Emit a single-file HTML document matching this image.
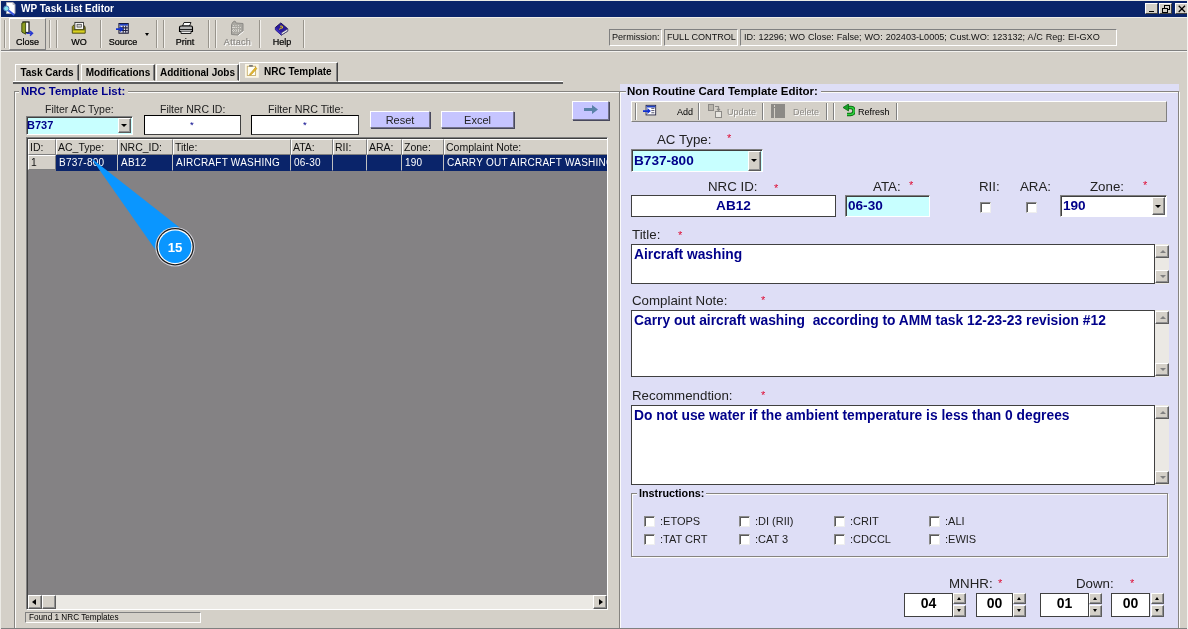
<!DOCTYPE html>
<html>
<head>
<meta charset="utf-8">
<title>WP Task List Editor</title>
<style>
*{box-sizing:border-box;margin:0;padding:0}
html{background:#d4d0c8}
html,body{width:1188px;height:629px;overflow:hidden;font-family:"Liberation Sans",sans-serif;font-size:11px;color:#000}
.a{position:absolute}
.t{position:absolute;white-space:nowrap;line-height:1}
/* title bar */
#tb{left:1px;top:1px;width:1186px;height:16px;background:#0a246a}
#tb .t{color:#fff;font-weight:bold;font-size:10px;left:20px;top:3px}
.wb{position:absolute;top:2px;width:13px;height:11px;background:#d4d0c8;border:1px solid;border-color:#fff #404040 #404040 #fff}
/* sunken/raised */
.sunk{border:1px solid;border-color:#808080 #fff #fff #808080}
.sunk2{border:2px solid;border-color:#808080 #d4d0c8 #d4d0c8 #404040;box-shadow:0 0 0 0 #000}
.raise{border:1px solid;border-color:#fff #808080 #808080 #fff}
.inp{position:absolute;background:#fff;border:1px solid #000;border-right-color:#404040;border-bottom-color:#404040}
.grp{position:absolute;border:1px solid #868480;box-shadow:1px 1px 0 #fbfbfa, inset 1px 1px 0 #fbfbfa}
.sep{position:absolute;width:2px;border-left:1px solid #808080;border-right:1px solid #fff}
.lbl{position:absolute;white-space:nowrap;line-height:1;color:#222}
.star{position:absolute;color:#de0a32;font-size:11px;line-height:1}
.btnl{position:absolute;background:#c6c5ff;border:1px solid;border-color:#fff #74748c #74748c #fff;box-shadow:1px 1px 0 #48485c;text-align:center;color:#222}
.cb{position:absolute;width:11px;height:11px;background:#fff;border:1px solid;border-color:#8a8a8a #eeeeee #eeeeee #8a8a8a;box-shadow:inset 1px 1px 0 #585858}
.sb{position:absolute;background:#d4d0c8;border:1px solid;border-color:#fff #5c5c5c #5c5c5c #fff;box-shadow:inset -1px -1px 0 #909090}
.hd{position:absolute;top:0;height:16px;background:#d4d0c8;border:1px solid;border-color:#fff #808080 #808080 #fff;font-size:10.5px;line-height:14px;padding-left:1px;white-space:nowrap;overflow:hidden;color:#111}
.cell{position:absolute;top:16px;height:16px;background:#0a246a;color:#fff;border-right:1px solid #c0c0c0;border-bottom:1px solid #0a246a;font-size:10px;line-height:16px;padding-left:3px;letter-spacing:.25px;white-space:nowrap;overflow:hidden}
.ta{position:absolute;background:#fff;border:1px solid #404040;color:#00008a;font-weight:bold;font-size:13.8px;line-height:1}
</style>
</head>
<body>
<div id="root" style="position:absolute;left:0;top:0;width:1188px;height:629px;will-change:transform;transform:translateZ(0)">
<!-- TITLE BAR -->
<div id="tb" class="a">
  <svg class="a" style="left:0.500px;top:0px" width="16" height="16" viewBox="0 0 16 16">
    <path d="M4.500 1.500 H11 L13 3.500 V12.500 H4.500 Z" fill="#fff" stroke="#b0b0b8" stroke-width="1"/>
    <path d="M11 1.500 V3.500 H13" fill="none" stroke="#b0b0b8" stroke-width=".8"/>
    <path d="M6.500 9.500 L11.500 13.500" stroke="#3a58e0" stroke-width="2.200" stroke-linecap="round"/>
    <circle cx="4.300" cy="7.500" r="2.600" fill="#86e4f0" stroke="#4a78b8" stroke-width="1"/>
  </svg>
  <div class="t">WP Task List Editor</div>
  <div class="wb" style="left:1144px"><div class="a" style="left:3px;top:6.500px;width:5px;height:1.500px;background:#000"></div></div>
  <div class="wb" style="left:1158px">
    <div class="a" style="left:4px;top:1px;width:6px;height:5px;border:1px solid #000;border-top-width:1.500px"></div>
    <div class="a" style="left:2px;top:3.500px;width:6px;height:5px;border:1px solid #000;border-top-width:1.500px;background:#d4d0c8"></div>
  </div>
  <div class="wb" style="left:1174px">
    <svg class="a" style="left:2px;top:1px" width="8" height="8" viewBox="0 0 8 8"><path d="M0.700 0.700 L7 7 M7 0.700 L0.700 7" stroke="#000" stroke-width="1.250"/></svg>
  </div>
</div>

<!-- MAIN TOOLBAR -->
<div id="toolbar" class="a" style="left:0;top:17px;width:1188px;height:34px;border-bottom:1px solid #808080;box-shadow:0 1px 0 #f4f3f0, inset 0 1px 0 #eeece8">
  <style>
   .tsep{position:absolute;top:3px;height:28px;width:2px;border-left:1px solid #98948c;border-right:1px solid #f2f0ec}
   .tl{position:absolute;top:21px;-webkit-text-stroke-width:.22px;font-size:9px;line-height:1;white-space:nowrap;text-align:center;color:#000}
  </style>
  <div class="tsep" style="left:4px"></div>
  <div class="a raise" style="left:9px;top:1px;width:37px;height:32px"></div>
  <div class="tsep" style="left:49px"></div>
  <div class="tsep" style="left:56px"></div>
  <div class="tsep" style="left:100px"></div>
  <div class="tsep" style="left:156px"></div>
  <div class="tsep" style="left:163px"></div>
  <div class="tsep" style="left:208px"></div>
  <div class="tsep" style="left:215px"></div>
  <div class="tsep" style="left:259px"></div>
  <div class="tsep" style="left:303px"></div>
  <!-- Close icon -->
  <svg class="a" style="left:20px;top:4px" width="16" height="16" viewBox="0 0 16 16">
    <rect x="3" y="1" width="6" height="10.500" fill="#fff" stroke="#101010" stroke-width="1.200"/>
    <path d="M1.800 2.200 L5.600 1 L5.600 13.200 L1.800 11 Z" fill="#8c9c20" stroke="#3c4810" stroke-width=".9"/>
    <path d="M6.500 12.300 H12 M10 10 L12.500 12.300 L10 14.600" fill="none" stroke="#2838d0" stroke-width="1.500"/>
  </svg>
  <div class="tl" style="left:10px;width:35px">Close</div>
  <!-- WO icon -->
  <svg class="a" style="left:71px;top:4px" width="15.500" height="15" viewBox="0 0 18 16" preserveAspectRatio="none">
    <rect x="4.5" y="1.500" width="10" height="8" fill="#fff" stroke="#303030" stroke-width="1"/>
    <rect x="7" y="3.5" width="5" height="3" fill="#d0d0d0" stroke="#404040" stroke-width=".8"/>
    <path d="M1.500 6 L3.5 4 L3.5 9 L15.500 9 L15.500 5 L16.500 7 L16.500 13 L1.500 13 Z" fill="#d8d020" stroke="#404010" stroke-width="1"/>
    <path d="M2 9.500 L16 9.500" stroke="#606010" stroke-width="1"/>
  </svg>
  <div class="tl" style="left:62px;width:34px">WO</div>
  <!-- Source icon -->
  <svg class="a" style="left:116px;top:5.500px" width="13.500" height="11.500" viewBox="0 0 16 13" preserveAspectRatio="none">
    <rect x="3.500" y="0.500" width="11" height="11" fill="#e8e8f0" stroke="#101030" stroke-width="1.200"/>
    <rect x="4" y="1" width="10" height="2" fill="#2040c0"/>
    <path d="M8.500 3 V11 M11.500 3 V11 M4 5.500 H14 M4 8.500 H14" stroke="#202040" stroke-width="1.300"/>
    <path d="M0 6 H5 V3.500 L9 7 L5 10.500 V8 H0 Z" fill="#1030d0"/>
  </svg>
  <div class="tl" style="left:104px;width:38px">Source</div>
  <div class="a" style="left:145px;top:16px;width:0;height:0;border-left:2.500px solid transparent;border-right:2.500px solid transparent;border-top:3px solid #000"></div>
  <!-- Print icon -->
  <svg class="a" style="left:178px;top:4px" width="16" height="16" viewBox="0 0 16 16">
    <path d="M4.500 5 L6 1.500 L13 1.500 L11.500 5 Z" fill="#fff" stroke="#202020" stroke-width="1"/>
    <path d="M1.500 6.500 Q1.500 5 3 5 L13 5 Q14.500 5 14.500 6.500 L14.500 10.500 L1.500 10.500 Z" fill="#b4b4b4" stroke="#000" stroke-width="1.100"/>
    <path d="M2 8.500 H14" stroke="#202020" stroke-width="1"/>
    <path d="M3 10.500 L3 12.500 L13 12.500 L13 10.500" fill="#f0f0f0" stroke="#202020" stroke-width="1"/>
  </svg>
  <div class="tl" style="left:168px;width:34px">Print</div>
  <!-- Attach icon (disabled) -->
  <svg class="a" style="left:229px;top:3px" width="16" height="17" viewBox="0 0 16 17">
    <path d="M2.500 4.500 L4 2 L6 1 L7 3 L14 3.500 L14 11 L9 15 L2.500 14.500 Z" fill="#aaa8a2" stroke="#8c8a86" stroke-width="1"/>
    <path d="M4.500 5 V13 M7 5 V13.500 M9.500 5 V13 M3 7.500 H13 M3 10.500 H12" stroke="#d8d6d0" stroke-width="1" stroke-dasharray="1 1"/>
    <path d="M9.500 15.500 L14.500 11.500" stroke="#fff" stroke-width="1"/>
  </svg>
  <div class="tl" style="left:220px;width:35px;color:#fff;margin:1px 0 0 1px;letter-spacing:.3px">Attach</div>
  <div class="tl" style="left:220px;width:35px;color:#8c8a86;letter-spacing:.3px">Attach</div>
  <!-- Help icon -->
  <svg class="a" style="left:274px;top:4.500px" width="15.500" height="14.500" viewBox="0 0 17 16" preserveAspectRatio="none">
    <path d="M1.500 6 L7.500 1 L15 7.500 L15 10 L8 14.500 L1.500 8.500 Z" fill="#2a1a9c" stroke="#140a50" stroke-width="1"/>
    <path d="M8 12 L15 7.800 L15 10 L8 14.300 Z" fill="#f4f4f4" stroke="#404060" stroke-width=".6"/>
    <path d="M1.500 6 L8 12 L8 14.500 L1.500 8.500 Z" fill="#4030c0"/>
    <text x="5.500" y="8.500" font-family="Liberation Sans" font-size="7" font-weight="bold" fill="#ffe000" transform="rotate(35 7 6)">?</text>
  </svg>
  <div class="tl" style="left:265px;width:34px">Help</div>
  <!-- Permission status -->
  <div class="a sunk" style="left:609px;top:12px;width:53px;height:17px"></div>
  <div class="a sunk" style="left:664px;top:12px;width:74px;height:17px"></div>
  <div class="a sunk" style="left:740px;top:12px;width:377px;height:17px"></div>
  <div class="t" style="left:612px;top:16px;font-size:9.1px;color:#111">Permission:</div>
  <div class="t" style="left:667px;top:16px;font-size:9.1px;color:#111">FULL CONTROL</div>
  <div class="t" style="left:744px;top:16px;font-size:9.1px;color:#111;word-spacing:.45px">ID: 12296; WO Close: False; WO: 202403-L0005; Cust.WO: 123132; A/C Reg: EI-GXO</div>
</div>

<!-- TABS -->
<div id="tabs">
  <style>
   .tab{position:absolute;top:64px;height:17px;border:1px solid;border-color:#fff #404040 transparent #fff;box-shadow:inset -1px 0 0 #808080;font-weight:bold;font-size:10px;line-height:15px;text-align:center;white-space:nowrap;color:#000}
  </style>
  <div class="tab" style="left:15px;width:64px">Task Cards</div>
  <div class="tab" style="left:81px;width:74px">Modifications</div>
  <div class="tab" style="left:156px;width:83px">Additional Jobs</div>
  <div class="tab" style="left:239px;top:62px;width:99px;height:20px;line-height:17px;text-align:left;padding-left:24px;z-index:2;background:#d4d0c8">NRC Template</div>
  <!-- line under tabs -->
  <div class="a" style="left:13px;top:81px;width:550px;height:3px;border-top:1px solid #fff;background:#5c5c5c"></div>
  <div class="a" style="left:240px;top:80px;width:96px;height:2px;background:#d4d0c8;z-index:3"></div>
  <!-- tab icon -->
  <svg class="a" style="left:245px;top:64px;z-index:4" width="13.800" height="13.800" viewBox="0 0 15 15">
    <rect x="0" y="0" width="15" height="15" fill="#fbf6e6"/>
    <rect x="2.500" y="2.500" width="9" height="10" fill="#fffef4" stroke="#c8b070" stroke-width="1"/>
    <rect x="4.500" y="1" width="4" height="2" fill="#7a7a7a"/>
    <path d="M5.500 10.500 L11.500 3.500 L13 5 L7 11.500 L5 12 Z" fill="#e8b828" stroke="#b08818" stroke-width=".6"/>
  </svg>
</div>

<!-- LEFT GROUP -->
<div id="left">
  <div class="grp" style="left:14px;top:91px;width:606px;height:538px"></div>
  <div class="t" style="left:19px;top:86px;padding:0 3px 0 2px;background:#d4d0c8;font-weight:bold;font-size:11.4px;color:#00008a">NRC Template List:</div>
  <div class="lbl" style="left:45px;top:104px;font-size:10.5px">Filter AC Type:</div>
  <div class="lbl" style="left:160px;top:104px;font-size:10.5px">Filter NRC ID:</div>
  <div class="lbl" style="left:268px;top:104px;font-size:10.7px">Filter NRC Title:</div>
  <!-- combo B737 -->
  <div class="a" style="left:26px;top:116px;width:107px;height:19px;background:#c8ffff;border:1px solid;border-color:#808080 #fff #fff #808080;box-shadow:inset 1px 1px 0 #404040"></div>
  <div class="t" style="left:27px;top:120px;font-weight:bold;font-size:11px;color:#00008a">B737</div>
  <div class="sb" style="left:118px;top:118px;width:13px;height:15px"></div>
  <div class="a" style="left:121px;top:124px;width:0;height:0;border-left:3px solid transparent;border-right:3px solid transparent;border-top:3px solid #000"></div>
  <div class="inp" style="left:144px;top:115px;width:97px;height:20px"></div>
  <div class="t" style="left:190px;top:120px;font-size:9.500px;color:#00008a">*</div>
  <div class="inp" style="left:251px;top:115px;width:108px;height:20px"></div>
  <div class="t" style="left:303px;top:120px;font-size:9.500px;color:#00008a">*</div>
  <div class="btnl" style="left:370px;top:111px;width:60px;height:17px;font-size:11px;line-height:16px">Reset</div>
  <div class="btnl" style="left:441px;top:111px;width:73px;height:17px;font-size:11px;line-height:16px">Excel</div>
  <div class="btnl" style="left:572px;top:101px;width:37px;height:19px">
    <svg class="a" style="left:11px;top:3px" width="14" height="9" viewBox="0 0 14 9"><path d="M0 3 H8 V0 L14 4.500 L8 9 V6 H0 Z" fill="#5a82a8"/></svg>
  </div>
  <!-- grid -->
  <div class="a" style="left:26px;top:137px;width:582px;height:473px;background:#848284;border:1px solid;border-color:#808080 #fff #fff #808080;overflow:hidden">
    <div class="a" style="left:0;top:0;width:580px;height:471px;border-top:1px solid #404040;border-left:1px solid #404040;overflow:hidden">
      <div class="hd" style="left:0px;width:28px">ID:</div><div class="hd" style="left:28px;width:62px">AC_Type:</div><div class="hd" style="left:90px;width:55px">NRC_ID:</div><div class="hd" style="left:145px;width:118px">Title:</div><div class="hd" style="left:263px;width:42px">ATA:</div><div class="hd" style="left:305px;width:34px">RII:</div><div class="hd" style="left:339px;width:35px">ARA:</div><div class="hd" style="left:374px;width:42px">Zone:</div><div class="hd" style="left:416px;width:164px">Complaint Note:</div><div class="hd" style="left:0px;width:28px;top:16px;height:15px;line-height:14px;padding-left:2px;font-size:10.3px">1</div><div class="cell" style="left:28px;width:62px">B737-800</div><div class="cell" style="left:90px;width:55px">AB12</div><div class="cell" style="left:145px;width:118px">AIRCRAFT WASHING</div><div class="cell" style="left:263px;width:42px">06-30</div><div class="cell" style="left:305px;width:34px"></div><div class="cell" style="left:339px;width:35px"></div><div class="cell" style="left:374px;width:42px">190</div><div class="cell" style="left:416px;width:164px">CARRY OUT AIRCRAFT WASHING ACCORDING TO AMM</div>
      <!-- h scrollbar -->
      <div class="a" style="left:0;top:456px;width:580px;height:14px;background:#ebe9e4"></div>
      <div class="sb" style="left:0;top:456px;width:14px;height:14px"><div class="a" style="left:3px;top:3px;width:0;height:0;border-top:3px solid transparent;border-bottom:3px solid transparent;border-right:4px solid #000"></div></div>
      <div class="sb" style="left:14px;top:456px;width:14px;height:14px"></div>
      <div class="sb" style="left:565px;top:456px;width:14px;height:14px"><div class="a" style="left:5px;top:3px;width:0;height:0;border-top:3px solid transparent;border-bottom:3px solid transparent;border-left:4px solid #000"></div></div>
    </div>
  </div>
  <div class="a sunk" style="left:25px;top:612px;width:176px;height:11px"></div>
  <div class="t" style="left:29px;top:614px;font-size:8.2px;color:#000">Found 1 NRC Templates</div>
  <!-- callout -->
  <svg class="a" style="left:80px;top:150px;z-index:10" width="130" height="130" viewBox="80 150 130 130">
    <path d="M91.300 158.300 L155.600 250 L179.500 227.500 Z" fill="#0a96ff"/>
    <circle cx="175.100" cy="246.700" r="19.800" fill="#d4d4dc"/>
    <circle cx="175.100" cy="246.700" r="18.800" fill="#1a1a1a"/>
    <circle cx="175.100" cy="246.700" r="17.500" fill="#fff"/>
    <circle cx="175.100" cy="246.700" r="16.300" fill="#0a96ff"/>
    <text x="175.100" y="251.900" text-anchor="middle" font-family="Liberation Sans" font-weight="bold" font-size="13.200" fill="#fff">15</text>
  </svg>
</div>

<!-- RIGHT PANEL -->
<div id="right">
  <style>
   .isep{position:absolute;top:103px;height:17px;width:2px;border-left:1px solid #808080;border-right:1px solid #fff}
   .il{position:absolute;top:107.500px;font-size:9px;line-height:1;white-space:nowrap}
  </style>
  <div class="a" style="left:620px;top:84px;width:559px;height:544px;background:#dedef6"></div>
  <div class="a" style="left:0px;top:628px;width:1188px;height:1px;background:#808080;z-index:20"></div>
  <div class="a" style="left:1187px;top:0;width:1px;height:629px;background:#f4f3f0;z-index:20"></div>
  <div class="a" style="left:0;top:0;width:1px;height:629px;background:#ecebe6;z-index:20"></div>
  <div class="a" style="left:0;top:0;width:1188px;height:1px;background:#ecebe6;z-index:20"></div>
  <div class="grp" style="left:619px;top:91px;width:560px;height:540px"></div>
  <div class="t" style="left:626px;top:86px;padding:0 3px 0 1px;background:#dedef6;font-weight:bold;font-size:11.5px;color:#000">Non Routine Card Template Editor:</div>
  <!-- inner toolbar -->
  <div class="a" style="left:631px;top:101px;width:536px;height:21px;background:#d4d0c8;border:1px solid;border-color:#fff #808080 #808080 #fff"></div>
  <div class="isep" style="left:635px"></div>
  <div class="isep" style="left:698px"></div>
  <div class="isep" style="left:762px"></div>
  <div class="isep" style="left:826px"></div>
  <div class="isep" style="left:833px"></div>
  <div class="isep" style="left:896px"></div>
  <svg class="a" style="left:643px;top:104px" width="14" height="14" viewBox="0 0 16 14">
    <rect x="3.500" y="0.500" width="11" height="11" fill="#fff" stroke="#202040" stroke-width="1"/>
    <rect x="4" y="1" width="10" height="2" fill="#2040c0"/>
    <path d="M9.500 4 H13 M9.500 6.500 H13 M9.500 9 H13" stroke="#404060" stroke-width="1"/>
    <path d="M0 6 H5 V3.500 L9 7 L5 10.500 V8 H0 Z" fill="#1030d0"/>
  </svg>
  <div class="il" style="left:677px">Add</div>
  <svg class="a" style="left:708px;top:104px" width="14" height="14" viewBox="0 0 14 14">
    <rect x="0.500" y="0.500" width="5" height="6" fill="#b8b4ac" stroke="#8c8a86"/>
    <rect x="7.500" y="7.500" width="6" height="6" fill="#e8e6e0" stroke="#8c8a86"/>
    <path d="M7 2.500 H10.500 V6 M9 5 L10.500 6.500 L12 5" fill="none" stroke="#8c8a86" stroke-width="1.200"/>
  </svg>
  <div class="il" style="left:727px;color:#fff;margin:1px 0 0 1px">Update</div>
  <div class="il" style="left:727px;color:#8c8a86">Update</div>
  <div class="a" style="left:771px;top:104px;width:14px;height:14px;background:#8c8a86"></div>
  <div class="a" style="left:774px;top:108px;width:1px;height:10px;background:#d4d0c8"></div>
  <div class="a" style="left:774px;top:105px;width:1px;height:2px;background:#d4d0c8"></div>
  <div class="il" style="left:793px;color:#fff;margin:1px 0 0 1px">Delete</div>
  <div class="il" style="left:793px;color:#8c8a86">Delete</div>
  <svg class="a" style="left:842px;top:104px" width="13" height="14" viewBox="0 0 13 14">
    <path d="M6 3.500 H9 Q12 3.500 12 7 Q12 10.500 8.500 10.500 H5" fill="none" stroke="#0a6a10" stroke-width="3.400"/>
    <path d="M6 3.500 H9 Q12 3.500 12 7 Q12 10.500 8.500 10.500 H5" fill="none" stroke="#30d040" stroke-width="1.600"/>
    <path d="M6.500 0 L1 3.500 L6.500 7 Z" fill="#18a028" stroke="#0a6a10" stroke-width=".8"/>
  </svg>
  <div class="il" style="left:858px;color:#000">Refresh</div>
  <!-- AC Type -->
  <div class="lbl" style="left:657px;top:133px;font-size:13.3px">AC Type:</div>
  <div class="star" style="left:727px;top:133px">*</div>
  <div class="a" style="left:631px;top:149px;width:132px;height:23px;background:#c8ffff;border:1px solid;border-color:#808080 #fff #fff #808080;box-shadow:inset 1px 1px 0 #404040"></div>
  <div class="t" style="left:634px;top:153.500px;font-weight:bold;font-size:13.6px;color:#00008a">B737-800</div>
  <div class="sb" style="left:748px;top:151px;width:13px;height:20px"></div>
  <div class="a" style="left:751px;top:159px;width:0;height:0;border-left:3px solid transparent;border-right:3px solid transparent;border-top:3px solid #000"></div>
  <!-- NRC ID row -->
  <div class="lbl" style="left:708px;top:180px;font-size:13.3px">NRC ID:</div>
  <div class="star" style="left:774px;top:183px">*</div>
  <div class="a" style="left:631px;top:195px;width:205px;height:22px;background:#fff;border:1px solid #404040"></div>
  <div class="t" style="left:631px;top:199px;width:205px;text-align:center;font-weight:bold;font-size:13.6px;color:#00008a">AB12</div>
  <div class="lbl" style="left:873px;top:180px;font-size:13.3px">ATA:</div>
  <div class="star" style="left:909px;top:180px">*</div>
  <div class="a" style="left:845px;top:195px;width:85px;height:22px;background:#c8ffff;border:1px solid;border-color:#808080 #fff #fff #808080;box-shadow:inset 1px 1px 0 #404040"></div>
  <div class="t" style="left:848px;top:199px;font-weight:bold;font-size:13.6px;color:#00008a">06-30</div>
  <div class="lbl" style="left:979px;top:180px;font-size:13.3px">RII:</div>
  <div class="cb" style="left:980px;top:202px"></div>
  <div class="lbl" style="left:1020px;top:180px;font-size:13.3px">ARA:</div>
  <div class="cb" style="left:1026px;top:202px"></div>
  <div class="lbl" style="left:1090px;top:180px;font-size:13.3px">Zone:</div>
  <div class="star" style="left:1143px;top:180px">*</div>
  <div class="a" style="left:1060px;top:195px;width:107px;height:22px;background:#fff;border:1px solid;border-color:#808080 #fff #fff #808080;box-shadow:inset 1px 1px 0 #404040"></div>
  <div class="t" style="left:1063px;top:199px;font-weight:bold;font-size:13.6px;color:#00008a">190</div>
  <div class="sb" style="left:1152px;top:197px;width:13px;height:18px"></div>
  <div class="a" style="left:1155px;top:205px;width:0;height:0;border-left:3px solid transparent;border-right:3px solid transparent;border-top:3px solid #000"></div>
  <!-- Title -->
  <div class="lbl" style="left:632px;top:228px;font-size:13.3px">Title:</div>
  <div class="star" style="left:678px;top:230px">*</div>
  <div class="ta" style="left:631px;top:244px;width:524px;height:40px;padding:3px 0 0 2px">Aircraft washing</div>
  <div class="a" style="left:1155px;top:244px;width:14px;height:40px;background:#ebe9e4"></div>
  <div class="sb" style="left:1155px;top:245px;width:14px;height:13px"><div class="a" style="left:3.500px;top:4px;width:0;height:0;border-left:3px solid transparent;border-right:3px solid transparent;border-bottom:3px solid #808080"></div></div>
  <div class="sb" style="left:1155px;top:270px;width:14px;height:13px"><div class="a" style="left:3.500px;top:4px;width:0;height:0;border-left:3px solid transparent;border-right:3px solid transparent;border-top:3px solid #808080"></div></div>
  <div class="lbl" style="left:632px;top:294px;font-size:13.3px">Complaint Note:</div>
  <div class="star" style="left:761px;top:295px">*</div>
  <div class="ta" style="left:631px;top:310px;width:524px;height:67px;padding:3px 0 0 2px">Carry out aircraft washing&nbsp; according to AMM task 12-23-23 revision #12</div>
  <div class="a" style="left:1155px;top:310px;width:14px;height:67px;background:#ebe9e4"></div>
  <div class="sb" style="left:1155px;top:311px;width:14px;height:13px"><div class="a" style="left:3.500px;top:4px;width:0;height:0;border-left:3px solid transparent;border-right:3px solid transparent;border-bottom:3px solid #808080"></div></div>
  <div class="sb" style="left:1155px;top:363px;width:14px;height:13px"><div class="a" style="left:3.500px;top:4px;width:0;height:0;border-left:3px solid transparent;border-right:3px solid transparent;border-top:3px solid #808080"></div></div>
  <div class="lbl" style="left:632px;top:389px;font-size:13.3px">Recommendtion:</div>
  <div class="star" style="left:761px;top:390px">*</div>
  <div class="ta" style="left:631px;top:405px;width:524px;height:80px;padding:3px 0 0 2px">Do not use water if the ambient temperature is less than 0 degrees</div>
  <div class="a" style="left:1155px;top:405px;width:14px;height:80px;background:#ebe9e4"></div>
  <div class="sb" style="left:1155px;top:406px;width:14px;height:13px"><div class="a" style="left:3.500px;top:4px;width:0;height:0;border-left:3px solid transparent;border-right:3px solid transparent;border-bottom:3px solid #808080"></div></div>
  <div class="sb" style="left:1155px;top:471px;width:14px;height:13px"><div class="a" style="left:3.500px;top:4px;width:0;height:0;border-left:3px solid transparent;border-right:3px solid transparent;border-top:3px solid #808080"></div></div>
  <!-- Instructions -->
  <div class="grp" style="left:631px;top:493px;width:537px;height:64px"></div>
  <div class="t" style="left:637px;top:488px;padding:0 2px 0 2px;background:#dedef6;font-weight:bold;font-size:10.8px;color:#000">Instructions:</div>
  <div class="cb" style="left:644px;top:516px"></div><div class="lbl" style="left:660px;top:516px;font-size:11px">:ETOPS</div><div class="cb" style="left:644px;top:534px"></div><div class="lbl" style="left:660px;top:534px;font-size:11px">:TAT CRT</div><div class="cb" style="left:739px;top:516px"></div><div class="lbl" style="left:755px;top:516px;font-size:11px">:DI (RII)</div><div class="cb" style="left:739px;top:534px"></div><div class="lbl" style="left:755px;top:534px;font-size:11px">:CAT 3</div><div class="cb" style="left:834px;top:516px"></div><div class="lbl" style="left:850px;top:516px;font-size:11px">:CRIT</div><div class="cb" style="left:834px;top:534px"></div><div class="lbl" style="left:850px;top:534px;font-size:11px">:CDCCL</div><div class="cb" style="left:929px;top:516px"></div><div class="lbl" style="left:945px;top:516px;font-size:11px">:ALI</div><div class="cb" style="left:929px;top:534px"></div><div class="lbl" style="left:945px;top:534px;font-size:11px">:EWIS</div>
  <!-- MNHR / Down -->
  <div class="lbl" style="left:949px;top:577px;font-size:13.3px">MNHR:</div>
  <div class="star" style="left:998px;top:578px">*</div>
  <div class="lbl" style="left:1076px;top:577px;font-size:13.3px">Down:</div>
  <div class="star" style="left:1130px;top:578px">*</div>
  <div class="a" style="left:904px;top:593px;width:49px;height:24px;background:#fff;border:1px solid #404040"></div>
  <div class="t" style="left:904px;top:596px;width:49px;text-align:center;font-weight:bold;font-size:14px;color:#000">04</div>
  <div class="sb" style="left:953px;top:593px;width:13px;height:11px"><div class="a" style="left:3px;top:3px;width:0;height:0;border-left:2.5px solid transparent;border-right:2.5px solid transparent;border-bottom:3px solid #000"></div></div>
  <div class="sb" style="left:953px;top:605px;width:13px;height:12px"><div class="a" style="left:3px;top:3px;width:0;height:0;border-left:2.5px solid transparent;border-right:2.5px solid transparent;border-top:3px solid #000"></div></div>
  <div class="a" style="left:976px;top:593px;width:37px;height:24px;background:#fff;border:1px solid #404040"></div>
  <div class="t" style="left:976px;top:596px;width:37px;text-align:center;font-weight:bold;font-size:14px;color:#000">00</div>
  <div class="sb" style="left:1013px;top:593px;width:13px;height:11px"><div class="a" style="left:3px;top:3px;width:0;height:0;border-left:2.5px solid transparent;border-right:2.5px solid transparent;border-bottom:3px solid #000"></div></div>
  <div class="sb" style="left:1013px;top:605px;width:13px;height:12px"><div class="a" style="left:3px;top:3px;width:0;height:0;border-left:2.5px solid transparent;border-right:2.5px solid transparent;border-top:3px solid #000"></div></div>
  <div class="a" style="left:1040px;top:593px;width:49px;height:24px;background:#fff;border:1px solid #404040"></div>
  <div class="t" style="left:1040px;top:596px;width:49px;text-align:center;font-weight:bold;font-size:14px;color:#000">01</div>
  <div class="sb" style="left:1089px;top:593px;width:13px;height:11px"><div class="a" style="left:3px;top:3px;width:0;height:0;border-left:2.5px solid transparent;border-right:2.5px solid transparent;border-bottom:3px solid #000"></div></div>
  <div class="sb" style="left:1089px;top:605px;width:13px;height:12px"><div class="a" style="left:3px;top:3px;width:0;height:0;border-left:2.5px solid transparent;border-right:2.5px solid transparent;border-top:3px solid #000"></div></div>
  <div class="a" style="left:1111px;top:593px;width:39px;height:24px;background:#fff;border:1px solid #404040"></div>
  <div class="t" style="left:1111px;top:596px;width:39px;text-align:center;font-weight:bold;font-size:14px;color:#000">00</div>
  <div class="sb" style="left:1151px;top:593px;width:13px;height:11px"><div class="a" style="left:3px;top:3px;width:0;height:0;border-left:2.5px solid transparent;border-right:2.5px solid transparent;border-bottom:3px solid #000"></div></div>
  <div class="sb" style="left:1151px;top:605px;width:13px;height:12px"><div class="a" style="left:3px;top:3px;width:0;height:0;border-left:2.5px solid transparent;border-right:2.5px solid transparent;border-top:3px solid #000"></div></div>
</div>

</div>
</body>
</html>
